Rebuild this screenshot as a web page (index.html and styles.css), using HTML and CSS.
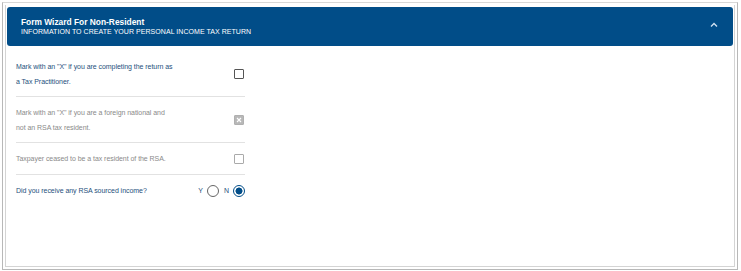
FILE: index.html
```html
<!DOCTYPE html>
<html lang="en">
<head>
  <meta charset="UTF-8">
  <meta name="viewport" content="width=device-width, initial-scale=1.0">
  <title>Form Wizard For Non-Resident</title>
  <link rel="stylesheet" href="styles.css">
</head>
<body>
  <div class="frame">
    <div class="panel">
      <div class="panel-head">
        <div class="titles">
          <h1>Form Wizard For Non-Resident</h1>
          <p>INFORMATION TO CREATE YOUR PERSONAL INCOME TAX RETURN</p>
        </div>
        <svg class="chevron" width="8" height="6" viewBox="0 0 8 6">
          <path d="M1 4.5 L4 1.5 L7 4.5" fill="none" stroke="#cfe0f0" stroke-width="1.4"/>
        </svg>
      </div>
      <div class="panel-body">
        <div class="row">
          <span class="label blue">Mark with an "X" if you are completing the return as<br>a Tax Practitioner.</span>
          <span class="check"></span>
        </div>
        <div class="row">
          <span class="label grey">Mark with an "X" if you are a foreign national and<br>not an RSA tax resident.</span>
          <span class="check disabled">
            <svg width="8" height="8" viewBox="0 0 8 8">
              <path d="M2 2 L6 6 M6 2 L2 6" stroke="white" stroke-width="1.1"/>
            </svg>
          </span>
        </div>
        <div class="row short">
          <span class="label grey">Taxpayer ceased to be a tax resident of the RSA.</span>
          <span class="check faint"></span>
        </div>
        <div class="row short last">
          <span class="label blue">Did you receive any RSA sourced income?</span>
          <span class="choices">
            <span class="opt">Y</span><span class="radio"></span>
            <span class="opt">N</span><span class="radio on"></span>
          </span>
        </div>
      </div>
    </div>
  </div>
</body>
</html>
```

FILE: styles.css
```css
body {
  margin: 0;
  background: white;
  font-family: "Liberation Sans", Arial, sans-serif;
}

.frame {
  margin: 2px 3px 1px 2px;
  height: 262px;
  border: 1px solid #b8b8b8;
  border-top-color: #d8d8d8;
  padding: 2px;
}

.panel {
  height: 100%;
  box-sizing: border-box;
  border: 1px solid #d4d4d4;
  border-top: none;
  padding: 2px 1px 0 1px;
}

.panel-head {
  display: flex;
  align-items: center;
  justify-content: space-between;
  height: 39px;
  padding: 0 15px 0 14px;
  background: #014d88;
  border-radius: 3px;
  color: white;
}

.titles {
  margin-top: -2px;
}

.titles h1 {
  margin: 0 0 1px 0;
  font-size: 8.4px;
  font-weight: bold;
}

.titles p {
  margin: 0;
  font-size: 7px;
  letter-spacing: 0.05px;
}

.chevron {
  margin-top: -3px;
}

.panel-body {
  width: 229px;
  padding: 5px 0 0 9px;
}

.row {
  display: flex;
  align-items: center;
  justify-content: space-between;
  height: 45px;
  border-bottom: 1px solid #e2e2e2;
}

.row.short {
  height: 31px;
}

.row.last {
  border-bottom: none;
}

.label {
  font-size: 7px;
  line-height: 15px;
  letter-spacing: -0.05px;
}

.blue {
  color: #26507c;
}

.grey {
  color: #8a8a8a;
}

.check {
  width: 8px;
  height: 8px;
  border: 1px solid #555;
  border-radius: 1px;
  margin-right: 1px;
}

.check.faint {
  border-color: #aaa;
}

.check.disabled {
  display: flex;
  border-color: #b0b0b0;
  background: #b8b8b8;
}

.choices {
  display: flex;
  align-items: center;
  gap: 4px;
}

.opt {
  font-size: 7px;
  color: #26507c;
  margin-left: 1px;
}

.radio {
  width: 10px;
  height: 10px;
  border: 1px solid #666;
  border-radius: 50%;
}

.radio.on {
  border-color: #014d88;
  background: radial-gradient(circle, #014d88 0 3.2px, white 3.8px);
}
```
